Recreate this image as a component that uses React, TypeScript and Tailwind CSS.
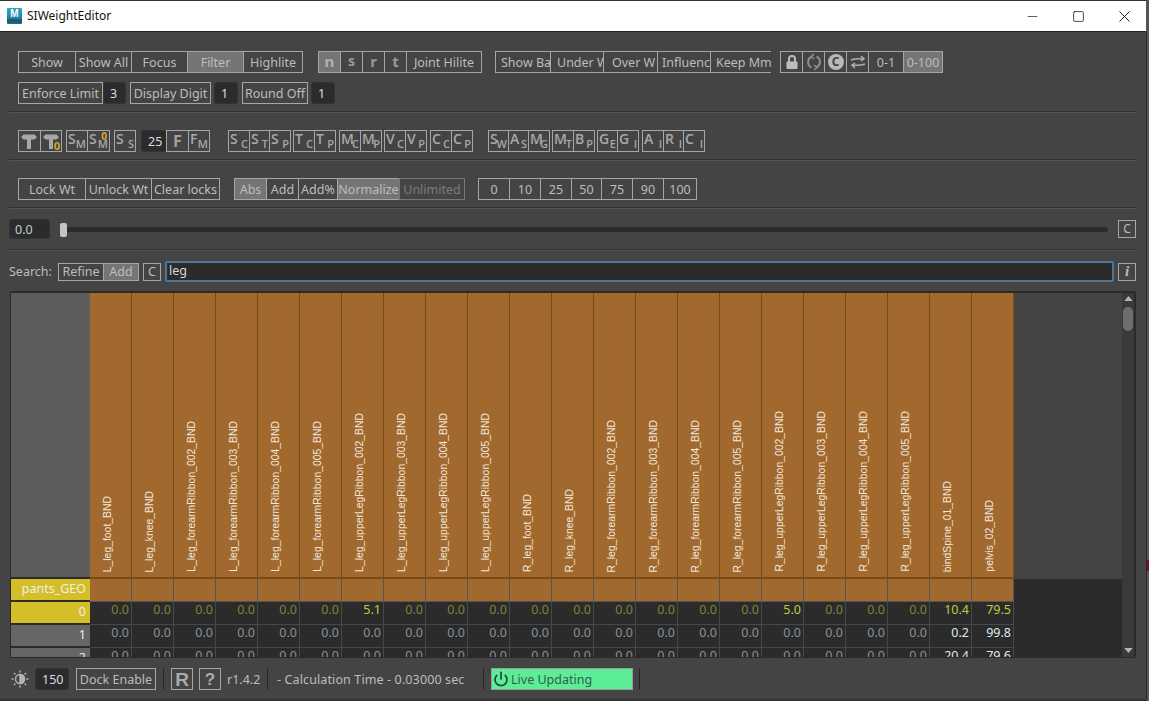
import { Minus, Power, Square, X } from "lucide-react";
import type { ReactNode } from "react";

const font = "[font-family:'Noto_Sans',sans-serif]";

const joints = [
  "L_leg_foot_BND",
  "L_leg_knee_BND",
  "L_leg_forearmRibbon_002_BND",
  "L_leg_forearmRibbon_003_BND",
  "L_leg_forearmRibbon_004_BND",
  "L_leg_forearmRibbon_005_BND",
  "L_leg_upperLegRibbon_002_BND",
  "L_leg_upperLegRibbon_003_BND",
  "L_leg_upperLegRibbon_004_BND",
  "L_leg_upperLegRibbon_005_BND",
  "R_leg_foot_BND",
  "R_leg_knee_BND",
  "R_leg_forearmRibbon_002_BND",
  "R_leg_forearmRibbon_003_BND",
  "R_leg_forearmRibbon_004_BND",
  "R_leg_forearmRibbon_005_BND",
  "R_leg_upperLegRibbon_002_BND",
  "R_leg_upperLegRibbon_003_BND",
  "R_leg_upperLegRibbon_004_BND",
  "R_leg_upperLegRibbon_005_BND",
  "bindSpine_01_BND",
  "pelvis_02_BND",
];

const rows: { label: string; values: Record<number, string> }[] = [
  { label: "0", values: { 6: "5.1", 16: "5.0", 20: "10.4", 21: "79.5" } },
  { label: "1", values: { 20: "0.2", 21: "99.8" } },
  { label: "2", values: { 20: "20.4", 21: "79.6" } },
];

// segmented toolbar button, neighbours share a border
function Btn({
  w,
  active,
  off,
  noRight,
  children,
}: {
  w: string;
  active?: boolean;
  off?: boolean;
  noRight?: boolean;
  children: ReactNode;
}) {
  return (
    <div
      className={`${w} h-[22px] shrink-0 -ml-px first:ml-0 border flex items-center justify-center overflow-hidden whitespace-nowrap text-[12.5px] leading-none ${
        off ? "border-[#777] text-[#7c7c7c]" : "border-[#a6a6a6] text-[#bdbdbd]"
      } ${active ? "bg-[#757575]" : ""} ${noRight ? "border-r-0" : ""} ${typeof children === "string" ? "pt-[2px]" : ""}`}
    >
      {children}
    </div>
  );
}

function Spin({ w, children }: { w: string; children: ReactNode }) {
  return (
    <div
      className={`${w} h-[22px] shrink-0 rounded-[3px] border border-[#333] bg-[#2b2b2b] flex items-center pl-[6px] pt-[2px] text-[12.5px] leading-none text-[#d5dde5]`}
    >
      {children}
    </div>
  );
}

// the tool icons: a big letter with a small one stepped down to its right
function Sub({ a, b }: { a: string; b: string }) {
  return (
    <span className="relative w-full h-full block font-semibold text-[#a8a8a8] [font-family:'Open_Sans',sans-serif] leading-none">
      <span className="absolute left-px top-[1px] text-[14px] leading-none">{a}</span>
      <span className="absolute right-px bottom-[2px] text-[11px] leading-none">{b}</span>
    </span>
  );
}

function Tool({ a, b, w = "w-[22px]" }: { a: string; b: string; w?: string }) {
  return (
    <Btn w={w}>
      <Sub a={a} b={b} />
    </Btn>
  );
}

function Sep() {
  return <div className="h-[2px] border-t border-[#303030] bg-[#555] ml-[9px] mr-[10px]" />;
}

function Tee({ zero }: { zero?: boolean }) {
  return (
    <span className="relative w-full h-full block">
      <svg viewBox="0 0 20 20" className="absolute left-0 top-0 w-[20px] h-[20px]">
        <path d="M2 6l2.500-2.500h11L18 6l-2.500 2.500H12V18H8V8.500H4.500z" fill="#a8a8a8" />
      </svg>
      {zero && (
        <span className="absolute right-px bottom-0 text-[11px] leading-none font-bold text-[#d9a92c]">0</span>
      )}
    </span>
  );
}

export default function App() {
  return (
    <div className={`relative w-[1149px] h-[701px] overflow-hidden bg-[#555] ${font}`}>
      <div className="w-[1146px] h-[700px] border-t border-[#333] flex flex-col bg-[#444] border-b-0">
        {/* title bar */}
        <div className="h-[31px] shrink-0 bg-white flex items-center border-b border-[#222]">
          <div className="ml-[7px] w-[15px] h-[16px] rounded-[1px] bg-gradient-to-b from-[#2fa6c7] to-[#17718f] flex flex-col items-center justify-start">
            <span className="text-[10px] leading-[11px] font-bold text-white [font-family:'Liberation_Sans',sans-serif]">M</span>
            <span className="w-full h-[4px] bg-[#245a70]" />
          </div>
          <span className="ml-[5px] text-[12px] text-[#111]">SIWeightEditor</span>
          <div className="ml-auto -mr-px flex items-center text-black">
            <div className="w-[46px] flex justify-center"><Minus size={15} strokeWidth={1} /></div>
            <div className="w-[46px] flex justify-center"><Square size={13} strokeWidth={1.3} /></div>
            <div className="w-[46px] flex justify-center"><X size={19} strokeWidth={1.1} /></div>
          </div>
        </div>

        <div className="flex-1 flex flex-col min-h-0">
          {/* first row */}
          <div className="mt-[19px] ml-[18px] flex">
            <div className="flex">
              <Btn w="w-[58px]">Show</Btn>
              <Btn w="w-[57px]">Show All</Btn>
              <Btn w="w-[57px]">Focus</Btn>
              <Btn w="w-[57px]" active>Filter</Btn>
              <Btn w="w-[60px]">Highlite</Btn>
            </div>
            <div className="flex ml-[15px]">
              <Btn w="w-[23px]" active><span className="font-bold text-[15px] -mt-[2px] text-[#b0b0b0]">n</span></Btn>
              <Btn w="w-[23px]"><span className="font-bold text-[14px] -mt-[2px] text-[#999]">s</span></Btn>
              <Btn w="w-[23px]"><span className="font-bold text-[15px] -mt-[2px] text-[#999]">r</span></Btn>
              <Btn w="w-[23px]"><span className="font-bold text-[15px] -mt-[2px] text-[#999]">t</span></Btn>
              <Btn w="w-[76px]">Joint Hilite</Btn>
            </div>
            <div className="flex ml-[13px]">
              <Btn w="w-[56px] justify-start! pl-[5px]">Show Ba</Btn>
              <Btn w="w-[54px] justify-start! pl-[6px]">Under W</Btn>
              <Btn w="w-[55px] justify-start! pl-[8px]">Over W</Btn>
              <Btn w="w-[54px] justify-start! pl-[4px]">Influence</Btn>
              <Btn w="w-[61px] justify-start! pl-[5px]" noRight>Keep Mm</Btn>
            </div>
            <div className="flex ml-[9px]">
              <Btn w="w-[23px]">
                <svg viewBox="0 0 16 16" className="w-[16px] h-[16px]">
                  <path d="M5 8V5a3 3 0 0 1 6 0v3" fill="none" stroke="#bdbdbd" strokeWidth="2" />
                  <rect x="2.500" y="7.500" width="11" height="7.500" rx="1" fill="#bdbdbd" />
                </svg>
              </Btn>
              <Btn w="w-[23px]">
                <svg viewBox="0 0 18 18" className="w-[18px] h-[18px]" fill="none" stroke="#8f8f8f" strokeWidth="2">
                  <path d="M7 3.500A6 6 0 0 0 6.500 14.500" />
                  <path d="M11 14.500A6 6 0 0 0 11.500 3.500" />
                  <path d="M9 1L6 3.500 9 6M9 12l3 2.500-3 2.500" strokeWidth="1.500" />
                </svg>
              </Btn>
              <Btn w="w-[23px]">
                <span className="w-[16px] h-[16px] rounded-full bg-[#b8b8b8] flex items-center justify-center text-[12px] leading-none font-bold text-[#444]">C</span>
              </Btn>
              <Btn w="w-[23px]">
                <svg viewBox="0 0 18 18" className="w-[18px] h-[18px]" fill="none" stroke="#b0b0b0" strokeWidth="1.500">
                  <path d="M2 7c4-1.500 8-1.500 13-1M12 3l3 3-3 2M16 11c-4 1.500-8 1.500-13 1M6 15l-3-3 3-2" />
                </svg>
              </Btn>
              <Btn w="w-[36px]">0-1</Btn>
              <Btn w="w-[40px]" active>0-100</Btn>
            </div>
          </div>

          {/* second row */}
          <div className="mt-[9px] ml-[18px] flex items-center">
            <Btn w="w-[85px]">Enforce Limit</Btn>
            <div className="ml-0"><Spin w="w-[23px]">3</Spin></div>
            <div className="ml-[4px]"><Btn w="w-[81px]">Display Digit</Btn></div>
            <div className="ml-[3px]"><Spin w="w-[24px]">1</Spin></div>
            <div className="ml-[4px]"><Btn w="w-[66px]">Round Off</Btn></div>
            <div className="ml-[3px]"><Spin w="w-[24px]">1</Spin></div>
          </div>

          <div className="mt-[7px]"><Sep /></div>

          {/* tool icons */}
          <div className="mt-[17px] ml-[18px] flex">
            <div className="flex">
              <Btn w="w-[23px]"><Tee /></Btn>
              <Btn w="w-[22px]"><Tee zero /></Btn>
            </div>
            <div className="flex ml-[4px]">
              <Tool a="S" b="M" />
              <Btn w="w-[23px]">
                <span className="relative w-full h-full block">
                  <Sub a="S" b="M" />
                  <span className="absolute right-[2px] top-0 text-[10px] leading-none font-bold text-[#d9a92c]">0</span>
                </span>
              </Btn>
            </div>
            <div className="flex ml-[4px]">
              <Tool a="S" b="S" />
            </div>
            <div className="flex ml-[5px]">
              <Spin w="w-[26px]">25</Spin>
              <Btn w="w-[23px]"><span className="font-bold text-[16px] text-[#a0a0a0]">F</span></Btn>
              <Tool a="F" b="M" />
            </div>
            <div className="flex ml-[18px]">
              <Tool a="S" b="C" w="w-[22px]" />
              <Tool a="S" b="T" w="w-[21px]" />
              <Tool a="S" b="P" w="w-[22px]" />
            </div>
            <div className="flex ml-[2px]">
              <Tool a="T" b="C" w="w-[22px]" />
              <Tool a="T" b="P" w="w-[22px]" />
            </div>
            <div className="flex ml-[3px]">
              <Tool a="M" b="C" w="w-[22px]" />
              <Tool a="M" b="P" w="w-[22px]" />
            </div>
            <div className="flex ml-[2px]">
              <Tool a="V" b="C" w="w-[22px]" />
              <Tool a="V" b="P" w="w-[22px]" />
            </div>
            <div className="flex ml-[3px]">
              <Tool a="C" b="C" w="w-[22px]" />
              <Tool a="C" b="P" w="w-[22px]" />
            </div>
            <div className="flex ml-[15px]">
              <Tool a="S" b="W" w="w-[21px]" />
              <Tool a="A" b="S" w="w-[21px]" />
              <Tool a="M" b="G" w="w-[22px]" />
            </div>
            <div className="flex ml-[2px]">
              <Tool a="M" b="T" w="w-[22px]" />
              <Tool a="B" b="P" w="w-[22px]" />
            </div>
            <div className="flex ml-[2px]">
              <Tool a="G" b="E" w="w-[21px]" />
              <Tool a="G" b="I" w="w-[22px]" />
            </div>
            <div className="flex ml-[3px]">
              <Tool a="A" b="I" w="w-[22px]" />
              <Tool a="R" b="I" w="w-[21px]" />
              <Tool a="C" b="I" w="w-[22px]" />
            </div>
          </div>

          <div className="mt-[7px]"><Sep /></div>

          {/* lock / mode / preset buttons */}
          <div className="mt-[17px] ml-[18px] flex">
            <div className="flex">
              <Btn w="w-[68px]">Lock Wt</Btn>
              <Btn w="w-[67px]">Unlock Wt</Btn>
              <Btn w="w-[69px]">Clear locks</Btn>
            </div>
            <div className="flex ml-[14px]">
              <Btn w="w-[33px]" active>Abs</Btn>
              <Btn w="w-[33px]">Add</Btn>
              <Btn w="w-[40px]">Add%</Btn>
              <Btn w="w-[63px]" active>Normalize</Btn>
              <Btn w="w-[66px]" off>Unlimited</Btn>
            </div>
            <div className="flex ml-[13px]">
              <Btn w="w-[32px]">0</Btn>
              <Btn w="w-[32px]">10</Btn>
              <Btn w="w-[32px]">25</Btn>
              <Btn w="w-[31px]">50</Btn>
              <Btn w="w-[32px]">75</Btn>
              <Btn w="w-[32px]">90</Btn>
              <Btn w="w-[34px]">100</Btn>
            </div>
          </div>

          <div className="mt-[7px]"><Sep /></div>

          {/* weight slider */}
          <div className="mt-[10px] ml-[9px] mr-[10px] flex items-center h-[20px]">
            <div className="w-[41px] h-[20px] rounded-[3px] border border-[#333] bg-[#2b2b2b] flex items-center pl-[5px] pt-[2px] text-[12.5px] leading-none text-[#c2ccd6]">0.0</div>
            <div className="flex-1 ml-[10px] relative h-[5px] rounded-full bg-[#2b2b2b]">
              <div className="absolute left-0 -top-[4px] w-[7px] h-[14px] rounded-[2px] bg-[#c4c4c4]" />
            </div>
            <div className="ml-[10px] w-[18px] h-[18px] border border-[#a6a6a6] flex items-center justify-center text-[12px] leading-none text-[#bdbdbd]">C</div>
          </div>

          <div className="mt-[10px]"><Sep /></div>

          {/* search */}
          <div className="mt-[10px] ml-[9px] mr-[10px] flex items-center h-[21px] text-[12.5px] leading-none text-[#bdbdbd]">
            <span className="w-[49px] pt-px">Search:</span>
            <div className="flex">
              <div className="w-[46px] h-[18px] border border-[#a6a6a6] flex items-center justify-center pt-px">Refine</div>
              <div className="-ml-px w-[36px] h-[18px] border border-[#a6a6a6] bg-[#757575] flex items-center justify-center pt-px">Add</div>
            </div>
            <div className="ml-[4px] w-[18px] h-[18px] border border-[#a6a6a6] flex items-center justify-center pt-px">C</div>
            <div className="ml-[4px] flex-1 h-[21px] rounded-[2px] border-2 border-[#4f7596] bg-[#2b2b2b] flex items-center pl-[2px] text-[#d8d8d8]">leg</div>
            <div className="ml-[4px] w-[18px] h-[18px] border border-[#a6a6a6] flex items-center justify-center font-bold italic text-[15px] [font-family:'Liberation_Serif',serif]">i</div>
          </div>

          {/* weight table */}
          <div className="mt-[9px] ml-[10px] mr-[10px] h-[367px] shrink-0 rounded-[2px] border border-[#2a2a2a] pt-px pr-px flex bg-[#2b2b2b] overflow-hidden relative">
            <div className="flex-1 min-w-0 overflow-hidden">
              <div className="grid grid-cols-[79px_repeat(22,42px)] grid-rows-[286px_23px_23px_23px_23px]">
                <div className="bg-[#5c5c5c] border-b-2 border-[#2b2b2b]" />
                {joints.map((j) => (
                  <div key={j} className="bg-[#a2692f] border-r border-[#7a4a15] border-b-2 border-b-[#7a4a15] flex items-start justify-center">
                    <span className="mt-auto mb-[5px] mr-[5px] [writing-mode:vertical-rl] rotate-180 text-[10.4px] leading-none text-[#f0e8dc] whitespace-nowrap [font-family:'Liberation_Sans',sans-serif]">
                      {j}
                    </span>
                  </div>
                ))}
                <div className="bg-[#d4bf28] border-b-2 border-[#2b2b2b] flex items-center justify-end pr-[4px] text-[12.5px] text-[#eee]">pants_GEO</div>
                {joints.map((j) => (
                  <div key={j} className="bg-[#a2692f] border-r border-[#555] border-b border-b-[#555]" />
                ))}
                {rows.map((r, i) => (
                  <div key={r.label} className="contents">
                    <div className={`${i === 0 ? "bg-[#d4bf28]" : "bg-[#666]"} border-b-2 border-[#2b2b2b] flex items-center justify-end pr-[4px] text-[12.5px] ${i === 0 ? "text-[#eee]" : "text-[#e2ecf4]"}`}>
                      {r.label}
                    </div>
                    {joints.map((j, c) => {
                      const v = r.values[c];
                      const color = v
                        ? i === 0
                          ? "text-[#c9c936]"
                          : "text-[#dfe8f0]"
                        : i === 0
                          ? "text-[#85802f]"
                          : "text-[#87919b]";
                      return (
                        <div key={j} className={`border-r border-b border-[#484848] bg-[#2b2b2b] flex justify-end pr-[2px] text-[12.5px] leading-[15px] ${color}`}>
                          {v ?? "0.0"}
                        </div>
                      );
                    })}
                  </div>
                ))}
              </div>
            </div>
            <div className="absolute left-[1003px] top-[1px] w-[108px] h-[286px] bg-[#444]" />
            <div className="w-[12px] shrink-0 bg-[#3a3a3a] relative z-10 flex flex-col items-center">
              <svg viewBox="0 0 10 6" className="mt-[3px] w-[9px] h-[5px]"><path d="M5 0l5 6H0z" fill="#b5b5b5" /></svg>
              <div className="mt-[6px] w-[10px] h-[24px] rounded-full bg-[#6e6e6e]" />
              <svg viewBox="0 0 10 6" className="mt-auto mb-[4px] w-[9px] h-[5px]"><path d="M5 6L0 0h10z" fill="#b5b5b5" /></svg>
            </div>
          </div>

          {/* status bar */}
          <div className="mt-[10px] ml-[11px] flex items-center h-[22px] text-[12.5px] leading-none text-[#bdbdbd]">
            <svg viewBox="0 0 18 18" className="w-[18px] h-[18px]" fill="none" stroke="#b5b5b5" strokeWidth="1.400">
              <circle cx="9" cy="9" r="4.500" />
              <path d="M9 4.500a4.500 4.500 0 0 1 0 9z" fill="#b5b5b5" />
              <path d="M9 0.500v2M9 15.500v2M0.500 9h2M15.500 9h2M3 3l1.400 1.400M13.600 13.600L15 15M3 15l1.400-1.400M13.600 4.400L15 3" />
            </svg>
            <div className="ml-[6px]"><Spin w="w-[34px]">150</Spin></div>
            <div className="ml-[7px] w-[80px] h-[22px] border border-[#a6a6a6] flex items-center justify-center pt-[2px]">Dock Enable</div>
            <div className="ml-[7px] w-px h-[22px] bg-[#262626]" />
            <div className="ml-[7px] w-[22px] h-[22px] border border-[#a6a6a6] flex items-center justify-center font-bold text-[19px] text-[#aaa] [font-family:'Liberation_Sans',sans-serif]">R</div>
            <div className="ml-[6px] w-[22px] h-[22px] border border-[#a6a6a6] flex items-center justify-center font-bold text-[17px] text-[#aaa] [font-family:'Liberation_Sans',sans-serif]">?</div>
            <span className="ml-[6px] w-[34px] pt-[2px]">r1.4.2</span>
            <div className="ml-[6px] w-px h-[22px] bg-[#262626]" />
            <span className="ml-[9px] w-[189px] whitespace-nowrap pt-[2px] tracking-[0.12px]">- Calculation Time - 0.03000 sec</span>
            <div className="ml-[17px] w-px h-[22px] bg-[#262626]" />
            <div className="ml-[7px] w-[142px] h-[22px] bg-[#5ced96] border border-[#9a9a9a] flex items-center text-[#33604b] pl-px">
              <Power size={16} strokeWidth={2.6} className="text-[#244a38]" />
              <span className="ml-[2px] pt-[2px]">Live Updating</span>
            </div>
            <div className="ml-[6px] w-px h-[22px] bg-[#262626]" />
          </div>
        </div>
      </div>
      <div className="absolute left-[1146px] top-[32px] w-px h-[669px] bg-[#2a2a2a]" />
      <div className="absolute left-0 top-[699px] w-[1147px] h-[2px] bg-[#333]" />
      <div className="absolute left-[1147px] top-[560px] w-[2px] h-[11px] bg-[#6d1230]" />
    </div>
  );
}
